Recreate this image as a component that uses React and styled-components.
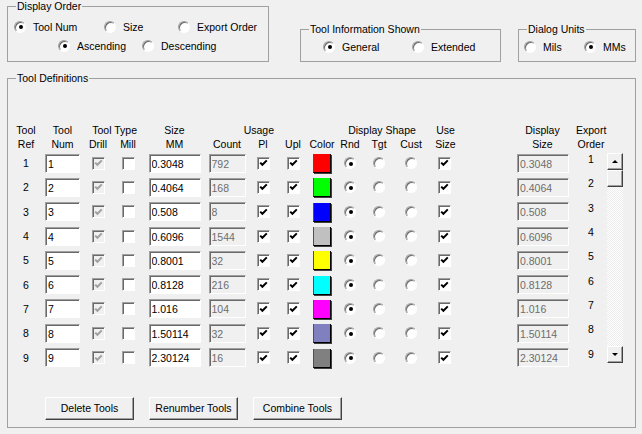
import React from "react";
import styled, { createGlobalStyle } from "styled-components";

const GlobalStyle = createGlobalStyle`
  html, body {
    margin: 0;
    padding: 0;
    background: #f0f0f0;
  }
  body {
    font-family: "Liberation Sans", Arial, sans-serif;
    font-size: 10.5px;
    color: #000;
  }
`;

const Dialog = styled.div`
  width: 642px;
  height: 434px;
  box-sizing: border-box;
  padding: 0 6px 0 7px;
  background: #f0f0f0;
  overflow: hidden;
`;

const TopRow = styled.div`
  display: flex;
  align-items: flex-end;
  height: 62px;
`;

const Group = styled.fieldset`
  box-sizing: border-box;
  margin: ${(p) => p.$mt || 0}px 0 0 ${(p) => p.$ml || 0}px;
  width: ${(p) => p.$w}px;
  height: ${(p) => p.$h}px;
  min-width: 0;
  border: 1px solid #a0a0a0;
  padding: ${(p) => p.$pt || 0}px 0 0 0;
`;

const Legend = styled.legend`
  margin-left: 8px;
  padding: 0 1px;
  line-height: 12px;
  font-size: 10.5px;
`;

const RadioRow = styled.div`
  display: flex;
  align-items: center;
  height: 19px;
  padding-left: ${(p) => p.$pl || 0}px;
`;

const RadioItem = styled.label`
  display: flex;
  align-items: center;
  width: ${(p) => (p.$w ? `${p.$w}px` : "auto")};
  white-space: nowrap;
`;

const RadioCircle = styled.span`
  box-sizing: border-box;
  width: 12px;
  height: 12px;
  flex: none;
  border-radius: 50%;
  background: #fff;
  border: 1px solid;
  border-color: #a0a0a0 #fff #fff #a0a0a0;
  box-shadow: inset 1px 1px 0 #696969;
  display: flex;
  align-items: center;
  justify-content: center;

  &::after {
    content: "";
    width: 4px;
    height: 4px;
    border-radius: 50%;
    margin: 1px 0 0 1px;
    background: ${(p) => (p.$on ? "#000" : "transparent")};
  }
`;

const RadioText = styled.span`
  margin-left: 7px;
`;

const Radio = ({ on, label, w }) => (
  <RadioItem $w={w}>
    <RadioCircle $on={on} />
    {label && <RadioText>{label}</RadioText>}
  </RadioItem>
);

const CheckBox = styled.span`
  box-sizing: border-box;
  width: 13px;
  height: 13px;
  display: flex;
  align-items: center;
  justify-content: center;
  border: 1px solid;
  border-color: #a0a0a0 #fff #fff #a0a0a0;
  box-shadow: inset 1px 1px 0 #696969;
  background: ${(p) => (p.$disabled ? "#f0f0f0" : "#fff")};

  svg {
    margin: 1px 0 0 1px;
  }
`;

const Check = ({ on, disabled }) => (
  <CheckBox $disabled={disabled}>
    {on && (
      <svg width="9" height="9" viewBox="0 0 9 9">
        <polyline
          points="1.2,3.6 3.4,5.8 7.8,1.4"
          fill="none"
          stroke={disabled ? "#a0a0a0" : "#000"}
          strokeWidth="2"
        />
      </svg>
    )}
  </CheckBox>
);

const TextBox = styled.input`
  box-sizing: border-box;
  width: ${(p) => p.$w}px;
  height: 19px;
  margin: 0;
  padding: 1px 1px 0 2px;
  border: 1px solid;
  border-color: #a0a0a0 #fff #fff #a0a0a0;
  box-shadow: inset 1px 1px 0 #696969;
  outline: none;
  font-family: "Liberation Sans", Arial, sans-serif;
  font-size: 10.5px;
  background: ${(p) => (p.disabled ? "#f0f0f0" : "#fff")};
  color: ${(p) => (p.disabled ? "#6d6d6d" : "#000")};
  -webkit-text-fill-color: ${(p) => (p.disabled ? "#6d6d6d" : "#000")};
  opacity: 1;
`;

const Table = styled.div`
  display: grid;
  grid-template-columns: 36px 37px 34px 26px 67px 38px 34px 26px 32px 24px 34px 30px 36px 55px 51px 38px 18px;
  grid-template-rows: 14px 14px repeat(9, 24.3px);
`;

const HeadCell = styled.div`
  grid-column: span ${(p) => p.$span || 1};
  text-align: ${(p) => p.$align || "center"};
  padding-right: ${(p) => p.$pr || 0}px;
  padding-left: ${(p) => p.$pl || 0}px;
  line-height: 14px;
  white-space: nowrap;
`;

const RefCell = styled.div`
  align-self: center;
  text-align: center;
`;

const Ctl = styled.div`
  display: flex;
  align-items: center;
  justify-content: ${(p) => p.$justify || "center"};
`;

const ExportCell = styled.div`
  align-self: center;
  text-align: center;
  padding-left: 8px;
  margin-bottom: 8px;
`;

const Swatch = styled.span`
  box-sizing: border-box;
  width: 18px;
  height: 19px;
  margin-top: 1px;
  background: ${(p) => p.$color};
  border-left: 1px solid #505050;
  border-right: 1px solid #000;
  border-bottom: 1px solid #000;
  box-shadow: 1px 1px 0 #404040;
`;

const ScrollBar = styled.div`
  grid-column: 17;
  grid-row: 3 / span 9;
  align-self: start;
  box-sizing: border-box;
  width: 16px;
  height: 210px;
  margin: 2px 0 0 1px;
  display: flex;
  flex-direction: column;
  background: repeating-conic-gradient(#fff 0 25%, #ececec 0 50%) 0 0 / 2px 2px;
`;

const ScrollButton = styled.div`
  box-sizing: border-box;
  width: 16px;
  height: 17px;
  flex: none;
  background: #f0f0f0;
  border: 1px solid;
  border-color: #fff #404040 #404040 #fff;
  box-shadow: inset -1px -1px 0 #a0a0a0;
  display: flex;
  align-items: center;
  justify-content: center;
`;

const Arrow = styled.span`
  width: 0;
  height: 0;
  border-left: 3px solid transparent;
  border-right: 3px solid transparent;
  ${(p) =>
    p.$down ? "border-top: 3px solid #000;" : "border-bottom: 3px solid #000;"}
`;

const Track = styled.div`
  flex: 1;
`;

const ButtonRow = styled.div`
  display: flex;
  gap: 15px;
  margin: 27px 0 0 37px;
`;

const Button = styled.button`
  box-sizing: border-box;
  width: 89px;
  height: 23px;
  padding: 0;
  font-family: "Liberation Sans", Arial, sans-serif;
  font-size: 10.5px;
  color: #000;
  background: #f0f0f0;
  border: 1px solid;
  border-color: #fff #404040 #404040 #fff;
  box-shadow: inset -1px -1px 0 #a0a0a0;
`;

const TOOLS = [
  { n: 1, size: "0.3048", count: "792", color: "#ff0000" },
  { n: 2, size: "0.4064", count: "168", color: "#00ff00" },
  { n: 3, size: "0.508", count: "8", color: "#0000ff" },
  { n: 4, size: "0.6096", count: "1544", color: "#c0c0c0" },
  { n: 5, size: "0.8001", count: "32", color: "#ffff00" },
  { n: 6, size: "0.8128", count: "216", color: "#00ffff" },
  { n: 7, size: "1.016", count: "104", color: "#ff00ff" },
  { n: 8, size: "1.50114", count: "32", color: "#8080c0" },
  { n: 9, size: "2.30124", count: "16", color: "#808080" },
];

const ToolRow = ({ t }) => (
  <>
    <RefCell>{t.n}</RefCell>
    <Ctl>
      <TextBox $w={35} readOnly defaultValue={t.n} />
    </Ctl>
    <Ctl>
      <Check on disabled />
    </Ctl>
    <Ctl>
      <Check />
    </Ctl>
    <Ctl>
      <TextBox $w={52} readOnly defaultValue={t.size} />
    </Ctl>
    <Ctl>
      <TextBox $w={37} disabled defaultValue={t.count} />
    </Ctl>
    <Ctl>
      <Check on />
    </Ctl>
    <Ctl>
      <Check on />
    </Ctl>
    <Ctl>
      <Swatch $color={t.color} />
    </Ctl>
    <Ctl>
      <Radio on />
    </Ctl>
    <Ctl>
      <Radio />
    </Ctl>
    <Ctl>
      <Radio />
    </Ctl>
    <Ctl>
      <Check on />
    </Ctl>
    <div />
    <Ctl $justify="flex-start">
      <TextBox $w={52} disabled defaultValue={t.size} />
    </Ctl>
    <ExportCell>{t.n}</ExportCell>
  </>
);

const App = () => {
  return (
    <Dialog>
      <GlobalStyle />
      <TopRow>
        <Group $w={262} $h={62} $pt={5}>
          <Legend>Display Order</Legend>
          <RadioRow $pl={6}>
            <Radio on label="Tool Num" w={90} />
            <Radio label="Size" w={74} />
            <Radio label="Export Order" />
          </RadioRow>
          <RadioRow $pl={50}>
            <Radio on label="Ascending" w={84} />
            <Radio label="Descending" />
          </RadioRow>
        </Group>
        <Group $w={201} $h={39} $ml={31} $pt={2}>
          <Legend>Tool Information Shown</Legend>
          <RadioRow $pl={22}>
            <Radio on label="General" w={89} />
            <Radio label="Extended" />
          </RadioRow>
        </Group>
        <Group $w={118} $h={39} $ml={17} $pt={2}>
          <Legend>Dialog Units</Legend>
          <RadioRow $pl={5}>
            <Radio label="Mils" w={60} />
            <Radio on label="MMs" />
          </RadioRow>
        </Group>
      </TopRow>

      <Group $w={629} $h={356} $mt={10} $pt={39}>
        <Legend>Tool Definitions</Legend>
        <Table>
          <HeadCell>Tool</HeadCell>
          <HeadCell>Tool</HeadCell>
          <HeadCell $span={2} $align="right" $pr={4}>
            Tool Type
          </HeadCell>
          <HeadCell>Size</HeadCell>
          <HeadCell $span={2} $align="right" $pr={6}>
            Usage
          </HeadCell>
          <HeadCell />
          <HeadCell />
          <HeadCell $span={3}>Display Shape</HeadCell>
          <HeadCell $pl={3}>Use</HeadCell>
          <HeadCell />
          <HeadCell>Display</HeadCell>
          <HeadCell $pl={8}>Export</HeadCell>
          <HeadCell />

          <HeadCell>Ref</HeadCell>
          <HeadCell>Num</HeadCell>
          <HeadCell>Drill</HeadCell>
          <HeadCell>Mill</HeadCell>
          <HeadCell>MM</HeadCell>
          <HeadCell>Count</HeadCell>
          <HeadCell>Pl</HeadCell>
          <HeadCell>Upl</HeadCell>
          <HeadCell>Color</HeadCell>
          <HeadCell>Rnd</HeadCell>
          <HeadCell>Tgt</HeadCell>
          <HeadCell>Cust</HeadCell>
          <HeadCell $pl={3}>Size</HeadCell>
          <HeadCell />
          <HeadCell>Size</HeadCell>
          <HeadCell $pl={8}>Order</HeadCell>
          <HeadCell />

          <ScrollBar>
            <ScrollButton>
              <Arrow />
            </ScrollButton>
            <ScrollButton />
            <Track />
            <ScrollButton>
              <Arrow $down />
            </ScrollButton>
          </ScrollBar>

          {TOOLS.map((t) => (
            <ToolRow key={t.n} t={t} />
          ))}
        </Table>
        <ButtonRow>
          <Button>Delete Tools</Button>
          <Button>Renumber Tools</Button>
          <Button>Combine Tools</Button>
        </ButtonRow>
      </Group>
    </Dialog>
  );
};

export default App;
